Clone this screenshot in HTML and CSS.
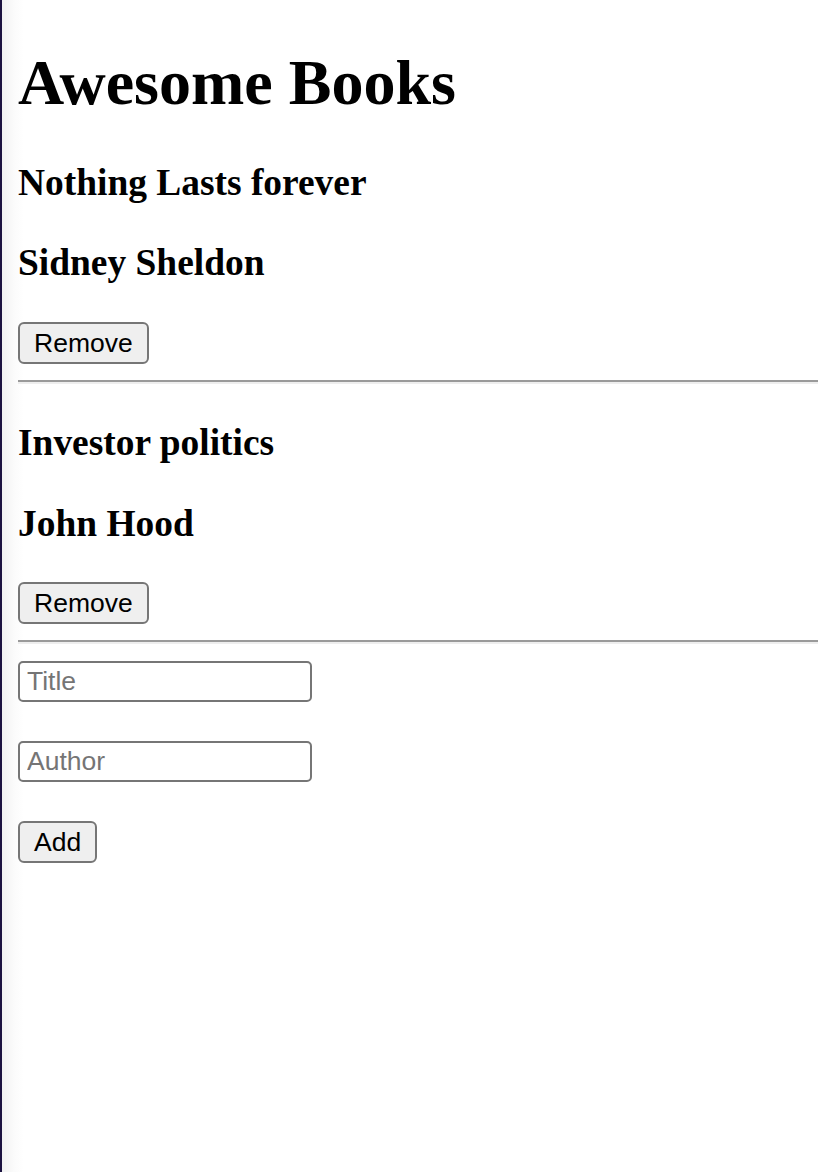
FILE: index.html
```html
<!DOCTYPE html>
<html lang="en">
<head>
<meta charset="utf-8">
<title>Awesome Books</title>
<link rel="stylesheet" href="styles.css">
</head>
<body>
<h1 class="title">Awesome Books</h1>
<div class="books">
  <div class="book">
    <h3 class="book-title">Nothing Lasts forever</h3>
    <h3 class="book-author">Sidney Sheldon</h3>
    <button class="btn" type="button">Remove</button>
    <hr class="sep">
  </div>
  <div class="book">
    <h3 class="book-title">Investor politics</h3>
    <h3 class="book-author">John Hood</h3>
    <button class="btn" type="button">Remove</button>
    <hr class="sep">
  </div>
</div>
<form class="add-form">
  <input class="field" type="text" placeholder="Title">
  <input class="field" type="text" placeholder="Author">
  <button class="btn" type="button">Add</button>
</form>
</body>
</html>
```

FILE: styles.css
```css
html {
  margin: 0;
  min-height: 100%;
  background: linear-gradient(to right, #1b1240 0, #1b1240 2px, #f1f1f1 2px, #fbfbfb 14px, #ffffff 24px);
}
body {
  margin: 0;
  padding: 1px 0 0 18px;
  font-family: "Liberation Serif", "Times New Roman", serif;
  color: #000;
}
.title {
  font-size: 64px;
  font-weight: bold;
  margin: 45px 0 42px;
  line-height: 73px;
}
.book-title,
.book-author {
  font-size: 37.44px;
  font-weight: bold;
  margin: 37.44px 0;
  line-height: 43px;
}
.book-title {
  margin-top: 0;
}
.book .btn {
  display: block;
}
.btn {
  font-family: "Liberation Sans", Arial, sans-serif;
  font-size: 26.5px;
  color: #000;
  background: #efefef;
  border: 2px solid #767676;
  border-radius: 6px;
  height: 42px;
  padding: 0 14px;
  line-height: 36px;
  margin: 0;
}
.sep {
  margin: 16px 0 17px;
  border: 0;
  border-top: 2px solid #9a9a9a;
  border-bottom: 2px solid #eeeeee;
  height: 0;
}
.books .book:first-child .sep {
  margin-bottom: 37.44px;
}
.add-form {
  display: flex;
  flex-direction: column;
  align-items: flex-start;
  gap: 39px;
  margin-top: 0;
}
.field {
  box-sizing: border-box;
  width: 294px;
  height: 41px;
  border: 2px solid #767676;
  border-radius: 5px;
  padding: 0 7px;
  font-family: "Liberation Sans", Arial, sans-serif;
  font-size: 26.5px;
  margin: 0;
  background: #fff;
}
.field::placeholder {
  color: #757575;
}
```
